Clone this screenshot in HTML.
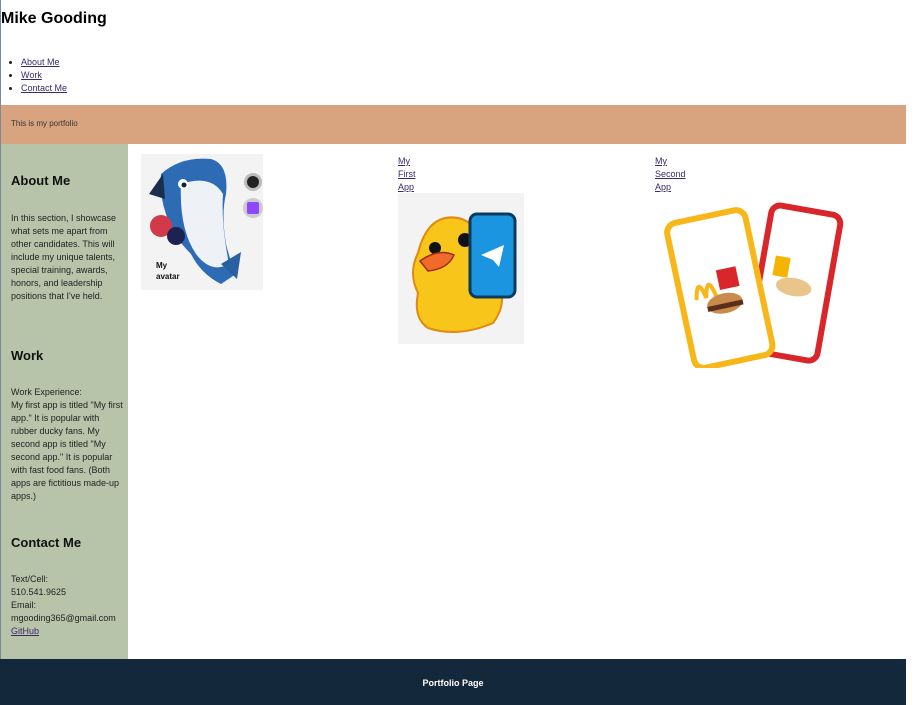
<!DOCTYPE html>
<html><head><meta charset="utf-8"><style>
*{margin:0;padding:0;box-sizing:border-box}
body{width:919px;height:705px;background:#fff;font-family:"Liberation Sans",sans-serif;position:relative;overflow:hidden;color:#222}
.a{position:absolute}
a{color:#3a2a6a;text-decoration:underline}
.sm{font-size:9px;line-height:13px}
h1{font-size:16px;font-weight:bold;color:#000}
h2{font-size:13px;font-weight:bold;color:#111}
</style></head><body>
<div class="a" style="left:0;top:0;width:1px;height:659px;background:#7a8a99"></div>
<h1 class="a" style="left:1px;top:10px">Mike Gooding</h1>
<ul class="a sm" style="left:21px;top:56px;list-style:disc;font-size:9px;line-height:13px">
<li><a>About Me</a></li><li><a>Work</a></li><li><a>Contact Me</a></li></ul>
<div class="a" style="left:1px;top:105px;width:905px;height:39px;background:#d8a47f"></div>
<div class="a" style="left:11px;top:119px;font-size:8px;color:#333">This is my portfolio</div>
<div class="a" style="left:1px;top:144px;width:127px;height:515px;background:#b7c4aa"></div>
<div class="a" style="left:11px;top:173px;width:112px">
<h2>About Me</h2>
<p class="sm" style="margin-top:24px">In this section, I showcase what sets me apart from other candidates. This will include my unique talents, special training, awards, honors, and leadership positions that I've held.</p>
</div>
<h2 class="a" style="left:11px;top:348px">Work</h2>
<p class="a sm" style="left:11px;top:386px;width:112px">Work Experience:<br>My first app is titled "My first app." It is popular with rubber ducky fans. My second app is titled "My second app." It is popular with fast food fans. (Both apps are fictitious made-up apps.)</p>
<h2 class="a" style="left:11px;top:535px">Contact Me</h2>
<p class="a sm" style="left:11px;top:573px;width:116px">Text/Cell:<br>510.541.9625<br>Email:<br>mgooding365@gmail.com<br><a>GitHub</a></p>

<svg class="a" style="left:141px;top:154px" width="122" height="136" viewBox="0 0 122 136">
<rect width="122" height="136" fill="#f3f3f3"/>
<path d="M20 20 Q40 2 70 5 Q88 10 85 40 Q80 60 85 90 Q90 110 95 120 L80 130 Q60 120 50 100 Q30 80 25 60 Q18 40 20 20Z" fill="#2d6bb5"/>
<path d="M40 30 Q70 20 82 40 Q80 70 88 110 Q70 120 55 100 Q38 75 40 30Z" fill="#eef2f6"/>
<circle cx="42" cy="30" r="5" fill="#fff"/><circle cx="43" cy="31" r="2.5" fill="#123"/>
<path d="M8 40 L22 20 L24 45Z" fill="#1a2e50"/>
<circle cx="20" cy="72" r="11" fill="#d23a4a"/><circle cx="35" cy="82" r="9" fill="#1d2350"/>
<path d="M80 110 L100 98 L96 125Z" fill="#2a5fa0"/>
<circle cx="112" cy="28" r="9" fill="#bbb"/><circle cx="112" cy="28" r="6" fill="#222"/>
<circle cx="112" cy="54" r="10" fill="#ccc"/><rect x="106" y="48" width="12" height="12" rx="2" fill="#9146ff"/>
<text x="15" y="114" font-size="8" font-weight="bold" fill="#111" font-family="Liberation Sans">My</text>
<text x="15" y="125" font-size="8" font-weight="bold" fill="#111" font-family="Liberation Sans">avatar</text>
</svg>

<div class="a sm" style="left:398px;top:155px"><a>My</a><br><a>First</a><br><a>App</a></div>
<svg class="a" style="left:398px;top:193px" width="126" height="151" viewBox="0 0 126 151">
<rect width="126" height="151" fill="#f3f3f3"/>
<path d="M20 60 Q30 20 60 25 Q85 30 80 70 L100 90 Q110 110 95 130 Q60 145 30 135 Q15 125 20 100 Q10 80 20 60Z" fill="#f8c61a" stroke="#e08a10" stroke-width="2"/>
<circle cx="37" cy="55" r="6" fill="#111"/><circle cx="67" cy="47" r="7" fill="#111"/>
<path d="M22 68 Q40 55 56 62 Q50 76 30 78Z" fill="#f06a2a" stroke="#9b2d10" stroke-width="1.5"/>
<rect x="72" y="21" width="45" height="83" rx="7" fill="#1b95e0" stroke="#0d3b5c" stroke-width="3"/>
<path d="M83 62 L106 52 L101 74 L95 67Z" fill="#fff"/>
</svg>

<div class="a sm" style="left:655px;top:155px"><a>My</a><br><a>Second</a><br><a>App</a></div>
<svg class="a" style="left:660px;top:200px" width="190" height="168" viewBox="0 0 190 168">
<g transform="rotate(10 140 80)"><rect x="100" y="10" width="70" height="148" rx="9" fill="#fff" stroke="#d9262b" stroke-width="6"/>
<rect x="112" y="60" width="15" height="20" fill="#f4b400"/><ellipse cx="135" cy="88" rx="18" ry="9" fill="#e9c48b"/></g>
<g transform="rotate(-12 60 90)"><rect x="20" y="15" width="80" height="148" rx="10" fill="#fff" stroke="#f7b718" stroke-width="6"/>
<path d="M35 95 Q40 70 45 95 Q50 70 55 95" fill="none" stroke="#f7b718" stroke-width="4"/>
<rect x="60" y="70" width="20" height="20" fill="#d9262b"/>
<ellipse cx="62" cy="104" rx="18" ry="10" fill="#c98b4b"/><rect x="44" y="104" width="36" height="5" fill="#5a2e1a"/></g>
</svg>

<div class="a" style="left:0;top:659px;width:906px;height:46px;background:#14283c"></div>
<div class="a" style="left:0;top:678px;width:906px;text-align:center;color:#fff;font-size:9px;font-weight:bold">Portfolio Page</div>
</body></html>
